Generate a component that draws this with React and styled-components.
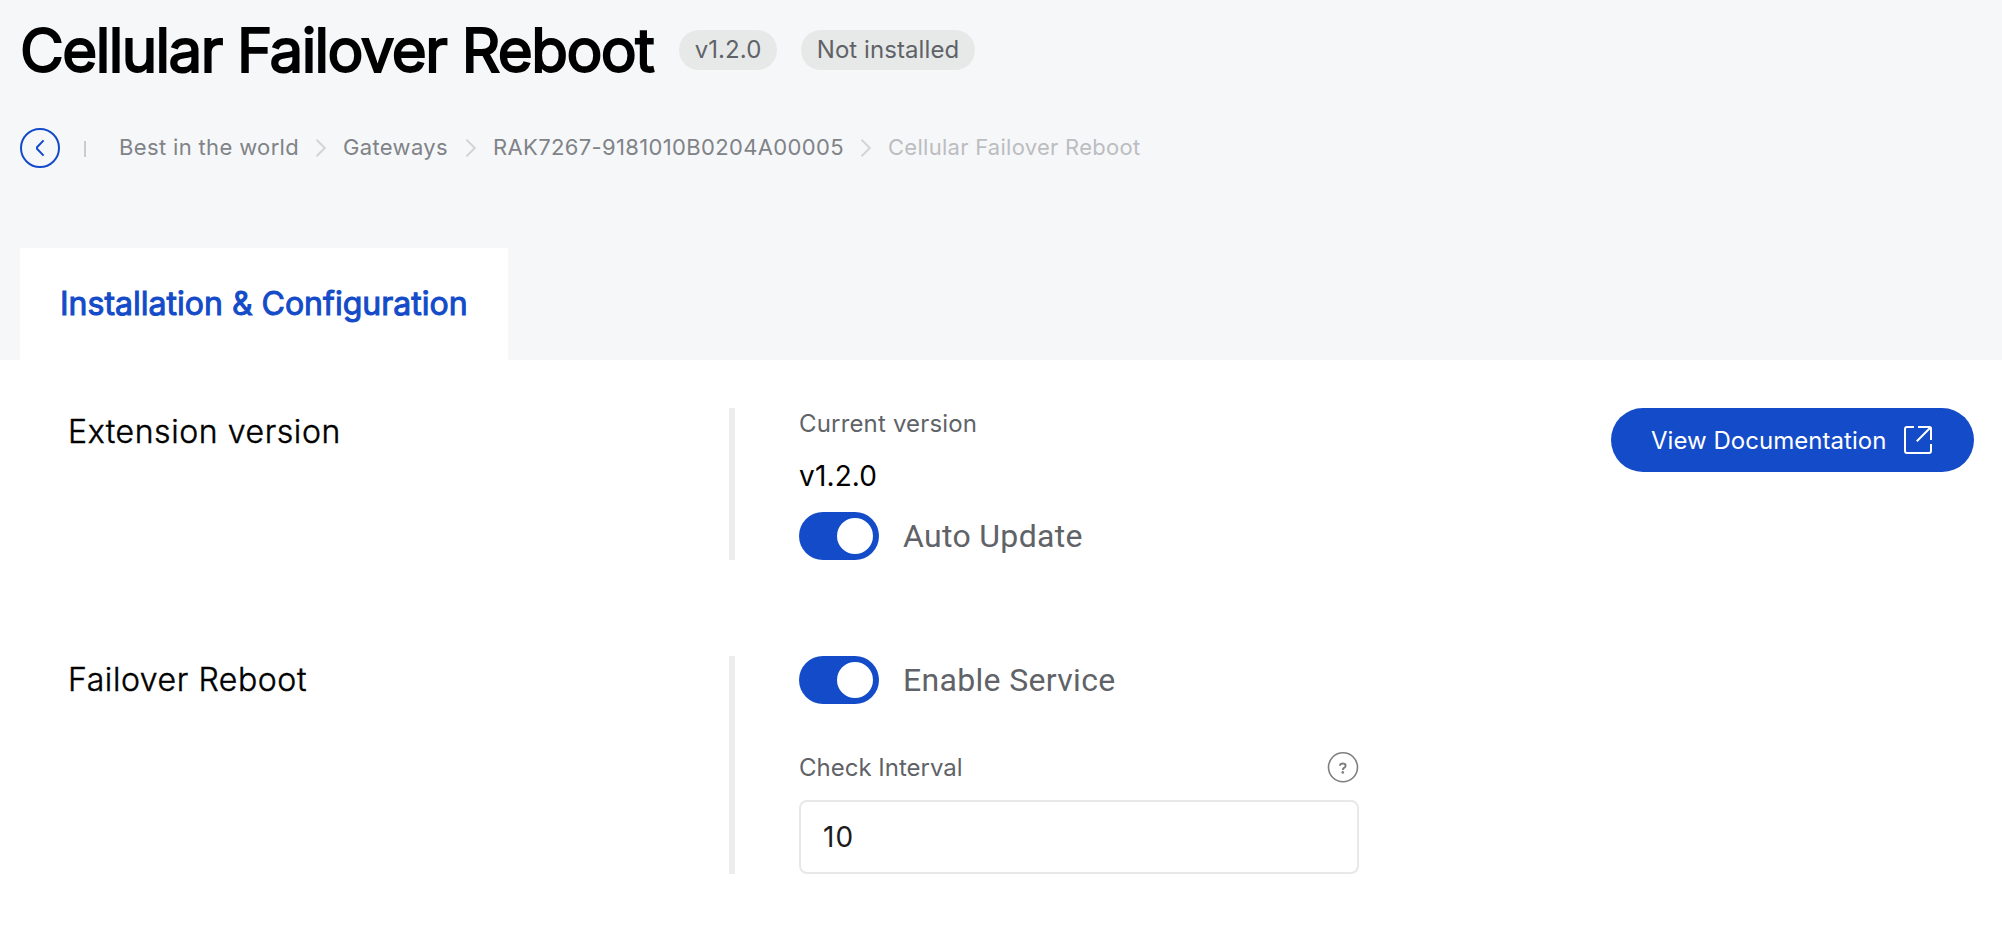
import { useState } from 'react';
import styled, { createGlobalStyle } from 'styled-components';

const GlobalStyle = createGlobalStyle`
    * {
        box-sizing: border-box;
    }
    body {
        margin: 0;
        background: #FFFFFF;
        font-family: Inter, 'Liberation Sans', sans-serif;
        color: #000000;
    }
    h1, h2, h3, p {
        margin: 0;
        font-weight: 400;
    }
`
const Page = styled.div`
    width: 100%;
    min-height: 100vh;
    background: #FFFFFF;
`
const Header = styled.header`
    height: 360px;
    padding: 0 20px;
    display: flex;
    flex-direction: column;
    background: #F6F7F9;
`
const TitleRow = styled.div`
    height: 100px;
    display: flex;
    align-items: center;
`
const PageTitle = styled.h1`
    width: 635px;
    font-size: 60px;
    line-height: 72px;
    letter-spacing: -1.55px;
    white-space: nowrap;
    -webkit-text-stroke: 1.9px #000000;
`
const Badges = styled.div`
    display: flex;
    gap: 24px;
    margin-left: 24px;
`
const Badge = styled.span`
    width: ${props => props.$width};
    height: 40px;
    padding-bottom: 2px;
    display: flex;
    align-items: center;
    justify-content: center;
    border-radius: 20px;
    background: #E7E9E8;
    font-size: 24px;
    letter-spacing: 0.08px;
    color: #5F6368;
`
const BreadcrumbRow = styled.nav`
    height: 40px;
    margin-top: 28px;
    display: flex;
    align-items: center;
`
const BackButton = styled.button`
    width: 40px;
    height: 40px;
    padding: 0;
    display: flex;
    align-items: center;
    justify-content: center;
    border: 2px solid #134BC8;
    border-radius: 50%;
    background: transparent;
    cursor: pointer;
`
const Divider = styled.span`
    width: 2px;
    height: 16px;
    margin: 2px 33px 0 24px;
    background: #CBCCCE;
`
const Crumb = styled.a`
    width: ${props => props.$width};
    padding-bottom: 2px;
    font-size: 22px;
    line-height: 28px;
    letter-spacing: ${props => props.$current ? '0.27px' : '0.35px'};
    white-space: nowrap;
    color: ${props => props.$current ? '#BCBDC0' : '#808387'};
`
const Separator = styled.svg`
    width: 12px;
    height: 20px;
    margin: 0 16px;
    flex: none;
`
const Tab = styled.button`
    width: 488px;
    height: 112px;
    margin-top: auto;
    padding: 0 40px 2px;
    border: 0;
    background: #FFFFFF;
    font-family: inherit;
    font-size: 32px;
    text-align: left;
    white-space: nowrap;
    letter-spacing: 0.01px;
    color: #134BC8;
    -webkit-text-stroke: 1px #134BC8;
`
const Content = styled.main`
    padding: 48px 28px 0 68px;
    display: flex;
    flex-direction: column;
    gap: 96px;
`
const Section = styled.section`
    display: flex;
    align-items: flex-start;
`
const SectionTitle = styled.h2`
    width: 661px;
    font-size: 32px;
    font-weight: 300;
    line-height: 48px;
    letter-spacing: 0.58px;
    -webkit-text-stroke: 0.45px #000000;
`
const SectionBody = styled.div`
    width: 630px;
    height: ${props => props.$height};
    padding-left: 64px;
    border-left: 6px solid #EDEDED;
`
const Label = styled.h3`
    padding-top: 1px;
    font-size: 24px;
    line-height: 30px;
    letter-spacing: ${props => props.$spacing};
    color: #5F6368;
`
const Version = styled.p`
    margin: 19px 0 18px;
    font-size: 28px;
    line-height: 36px;
    letter-spacing: 0.15px;
`
const SwitchRow = styled.label`
    height: 48px;
    display: flex;
    align-items: center;
    gap: 24px;
    font-family: Roboto, sans-serif;
    font-size: 32px;
    letter-spacing: 0.32px;
    color: #5F6368;
`
const Track = styled.button`
    width: 80px;
    height: 48px;
    padding: 6px;
    display: flex;
    justify-content: ${props => props.$on ? 'flex-end' : 'flex-start'};
    border: 0;
    border-radius: 24px;
    background: ${props => props.$on ? '#134BC8' : '#C4C6C8'};
    cursor: pointer;
`
const Knob = styled.span`
    width: 36px;
    height: 36px;
    border-radius: 50%;
    background: #FFFFFF;
`
const DocButton = styled.button`
    width: 363px;
    height: 64px;
    margin-left: auto;
    padding: 0 42px 0 40px;
    display: flex;
    align-items: center;
    justify-content: space-between;
    border: 0;
    border-radius: 32px;
    background: #134BC8;
    font-family: inherit;
    font-size: 24px;
    letter-spacing: 0.03px;
    white-space: nowrap;
    color: #FFFFFF;
    cursor: pointer;
`
const FieldHead = styled.div`
    height: 32px;
    margin: 47px 0 17px;
    display: flex;
    align-items: center;
    justify-content: space-between;
`
const Input = styled.input`
    display: block;
    width: 100%;
    height: 74px;
    padding: 0 22px;
    border: 2px solid #E8E8E8;
    border-radius: 8px;
    outline: none;
    background: #FFFFFF;
    font-family: inherit;
    font-size: 28px;
    letter-spacing: 1px;
    color: #1B1B1B;
`

const ChevronSeparator = () => {
    return (
        <Separator viewBox='0 0 12 20' fill='none'>
            <path d='M1.5 1.8 L9.8 10 L1.5 18.2' stroke='#D3D4D6' strokeWidth='2' />
        </Separator>
    )
}

const Switch = ({ label }) => {
    const [on, setOn] = useState(true);
    return (
        <SwitchRow>
            <Track type='button' role='switch' aria-checked={on} $on={on} onClick={() => setOn(!on)}>
                <Knob />
            </Track>
            {label}
        </SwitchRow>
    )
}

const App = () => {
    const [interval, setInterval] = useState('10');
    return (
        <>
        <GlobalStyle />
        <Page>
            <Header>
                <TitleRow>
                    <PageTitle>Cellular Failover Reboot</PageTitle>
                    <Badges>
                        <Badge $width='98px'>v1.2.0</Badge>
                        <Badge $width='174px'>Not installed</Badge>
                    </Badges>
                </TitleRow>
                <BreadcrumbRow>
                    <BackButton type='button' aria-label='Back'>
                        <svg width='12' height='20' viewBox='0 0 12 20' fill='none'>
                            <path d='M9.6 2.4 L3 9.2 V10.8 L9.6 17.6' stroke='#134BC8' strokeWidth='2' strokeLinejoin='round' />
                        </svg>
                    </BackButton>
                    <Divider />
                    <Crumb $width='180px'>Best in the world</Crumb>
                    <ChevronSeparator />
                    <Crumb $width='106px'>Gateways</Crumb>
                    <ChevronSeparator />
                    <Crumb $width='351px'>RAK7267-9181010B0204A00005</Crumb>
                    <ChevronSeparator />
                    <Crumb $current>Cellular Failover Reboot</Crumb>
                </BreadcrumbRow>
                <Tab type='button'>Installation &amp; Configuration</Tab>
            </Header>
            <Content>
                <Section>
                    <SectionTitle>Extension version</SectionTitle>
                    <SectionBody $height='152px'>
                        <Label $spacing='0.17px'>Current version</Label>
                        <Version>v1.2.0</Version>
                        <Switch label='Auto Update' />
                    </SectionBody>
                    <DocButton type='button'>
                        View Documentation
                        <svg width='28' height='28' viewBox='0 0 28 28' fill='none' stroke='#FFFFFF' strokeWidth='2' strokeLinejoin='round'>
                            <path d='M10 1 H3 Q1 1 1 3 V25 Q1 27 3 27 H25 Q27 27 27 25 V18' />
                            <path d='M14 1 H25.5 Q27 1 27 2.5 V14 M26.5 1.5 L12.8 15.2' />
                        </svg>
                    </DocButton>
                </Section>
                <Section>
                    <SectionTitle>Failover Reboot</SectionTitle>
                    <SectionBody $height='218px'>
                        <Switch label='Enable Service' />
                        <FieldHead>
                            <Label $spacing='0'>Check Interval</Label>
                            <svg width='32' height='32' viewBox='0 0 32 32' fill='none' stroke='#7F7F7F'>
                                <circle cx='16' cy='16.3' r='14.5' strokeWidth='1.6' />
                                <path d='M13 14.8 Q13 12.4 15.9 12.4 Q18.6 12.4 18.6 14.7 Q18.6 16 17 16.8 Q15.8 17.5 15.8 19' strokeWidth='2' />
                                <circle cx='15.8' cy='21.4' r='1.3' fill='#7F7F7F' stroke='none' />
                            </svg>
                        </FieldHead>
                        <Input value={interval} onChange={e => setInterval(e.target.value)} />
                    </SectionBody>
                </Section>
            </Content>
        </Page>
        </>
    )
}

export default App;
